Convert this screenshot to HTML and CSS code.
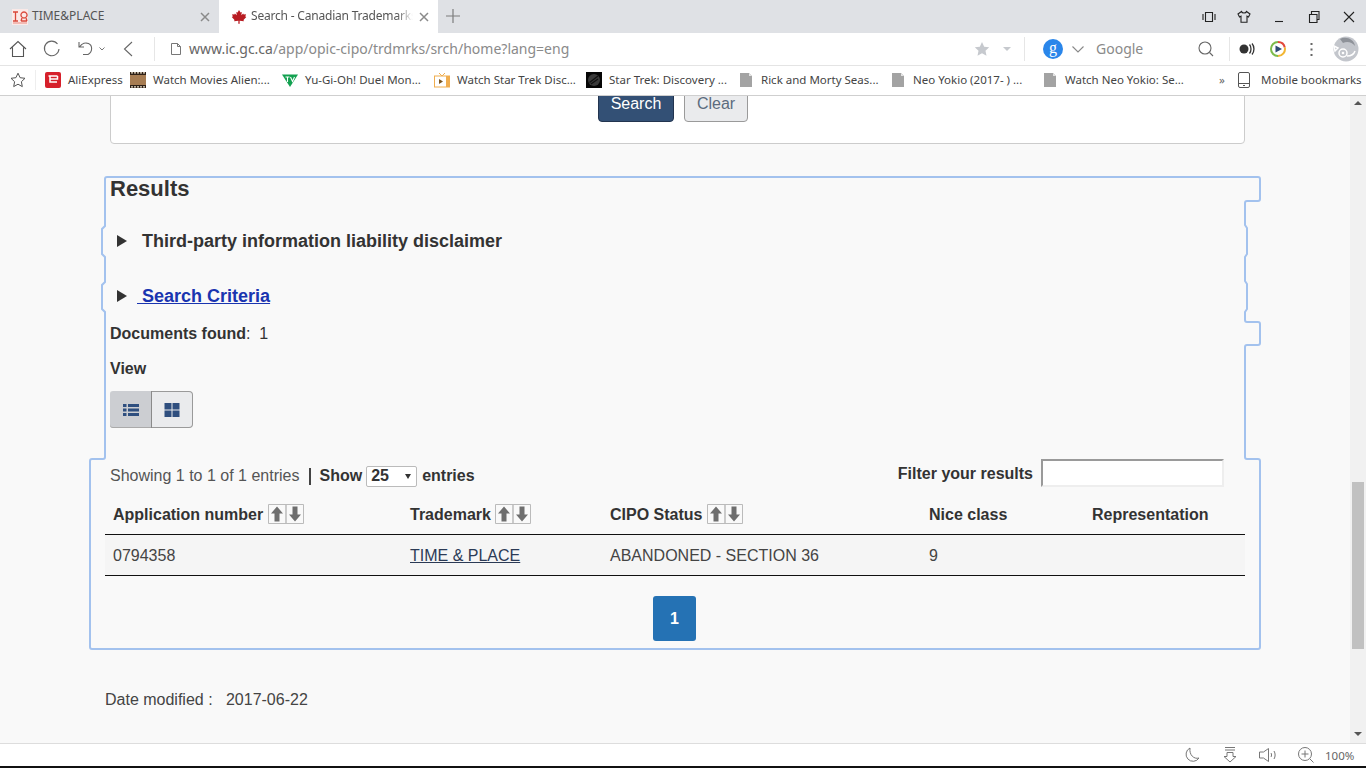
FILE: index.html

```html
<!DOCTYPE html>
<html lang="en">

<head>
    <meta charset="UTF-8">
    <title>Search - Canadian Trademarks</title>
    <link rel="stylesheet" href="styles.css">
</head>

<body>
    <!-- Tab strip -->
    <div class="tabstrip">
        <div class="tab">
            <svg class="fav" viewBox="0 0 16 16"><rect width="16" height="16" fill="#fbe9e7"/><path d="M1 3h5M3.500 3v9M1 12h5M9 12h6M12 3a3 3 0 1 0 .01 0M10 9l-1 3M14 9l1 3" fill="none" stroke="#d9483b" stroke-width="1.300"/><path d="M1 14h14" stroke="#e98b80"/></svg>
            <span class="tab-title">TIME&amp;PLACE</span>
            <svg class="tab-close" viewBox="0 0 10 10"><path d="M1 1l8 8M9 1l-8 8" stroke="#8a8a8a" stroke-width="1.500"/></svg>
        </div>
        <div class="tab tab-active">
            <svg class="fav" viewBox="0 0 16 16"><path d="M8 1l1.500 2.500 1.300-.6-.5 3.300 1.900-1.800.5 1.200 2.300-.4-.7 2.300 1 .5L12.500 11l.4 1.300-4.300-.5.100 3H7.300l.1-3-4.300.5.400-1.300L.8 8l1-.5-.7-2.300 2.300.4.500-1.200 1.900 1.800-.5-3.300 1.300.6z" fill="#b81c22"/></svg>
            <span class="tab-title tab-fade">Search - Canadian Trademarks</span>
            <svg class="tab-close" viewBox="0 0 10 10"><path d="M1 1l8 8M9 1l-8 8" stroke="#8a8a8a" stroke-width="1.500"/></svg>
        </div>
        <svg class="new-tab" viewBox="0 0 14 14"><path d="M7 0v14M0 7h14" stroke="#7d7d7d" stroke-width="1.200"/></svg>
        <div class="window-btns">
            <svg viewBox="0 0 14 14"><path d="M3.500 2.500h7v9h-7zM1 4v6M13 4v6" fill="none" stroke="#222" stroke-width="1.100"/></svg>
            <svg viewBox="0 0 14 14"><path d="M4.500 1.500L1 4l1.500 3 1.500-.8v6h6v-6l1.500.8L13 4 9.500 1.500c-.5 2-4.500 2-5 0z" fill="none" stroke="#222" stroke-width="1.100"/></svg>
            <svg viewBox="0 0 14 14"><path d="M3 11.500h8" stroke="#222" stroke-width="1.100"/></svg>
            <svg viewBox="0 0 14 14"><path d="M2.500 4.500h7.500v8H2.500zM4.500 4.500v-3h7.500v8h-2" fill="none" stroke="#222" stroke-width="1.100"/></svg>
            <svg viewBox="0 0 14 14"><path d="M2 2l10 10M12 2L2 12" stroke="#222" stroke-width="1.100"/></svg>
        </div>
    </div>

    <!-- Address bar -->
    <div class="toolbar">
        <svg class="tb-home" viewBox="0 0 18 18"><path d="M1 9l8-7.500L17 9M3.500 7.500v9h11v-9" fill="none" stroke="#555" stroke-width="1.100"/></svg>
        <svg class="tb-reload" viewBox="0 0 18 18"><path d="M14.500 4A7.300 7.300 0 1 0 16 9" fill="none" stroke="#666" stroke-width="1.100"/></svg>
        <svg class="tb-undo" viewBox="0 0 18 18"><path d="M2 2v5h5M2.500 7C5 3 9 2.500 11.500 3.500c4 1.700 4.500 8-.5 11H6" fill="none" stroke="#666" stroke-width="1.100"/></svg>
        <svg class="tb-chev" viewBox="0 0 6 4"><path d="M.5.500L3 3 5.500.5" fill="none" stroke="#777"/></svg>
        <svg class="tb-back" viewBox="0 0 10 16"><path d="M9 1L1.500 8 9 15" fill="none" stroke="#666" stroke-width="1.100"/></svg>
        <div class="tb-sep tb-sep-first"></div>
        <svg class="tb-doc" viewBox="0 0 10 12"><path d="M.5.500h6l3 3v8h-9zM6.500.5v3h3" fill="none" stroke="#777"/></svg>
        <div class="url"><span class="url-host">www.ic.gc.ca</span>/app/opic-cipo/trdmrks/srch/home?lang=eng</div>
        <svg class="tb-star" viewBox="0 0 16 16"><path d="M8 1l2.200 4.700 5 .6-3.700 3.500 1 5L8 12.300 3.500 14.800l1-5L.8 6.300l5-.6z" fill="#c6c9ce"/></svg>
        <svg class="tb-drop" viewBox="0 0 8 4"><path d="M0 0h8L4 4z" fill="#c6c9ce"/></svg>
        <div class="tb-sep"></div>
        <div class="g-badge">g</div>
        <svg class="tb-gchev" viewBox="0 0 12 7"><path d="M.5.500L6 6l5.500-5.500" fill="none" stroke="#888" stroke-width="1.100"/></svg>
        <div class="search-box">Google</div>
        <svg class="tb-search" viewBox="0 0 16 16"><circle cx="7" cy="7" r="6" fill="none" stroke="#666" stroke-width="1.100"/><path d="M11.500 11.500L15 15" stroke="#666" stroke-width="1.100"/></svg>
        <div class="tb-sep"></div>
        <svg class="tb-rec" viewBox="0 0 16 12"><circle cx="5" cy="6" r="4.500" fill="#333"/><path d="M10.500 1.500c2 2.500 2 6.500 0 9M13 .5c2.600 3 2.600 8 0 11" fill="none" stroke="#333" stroke-width="1.300"/></svg>
        <svg class="tb-play" viewBox="0 0 16 16"><path d="M8 1a7 7 0 0 1 6.800 5.500" fill="none" stroke="#e2483b" stroke-width="2"/><path d="M14.800 6.500A7 7 0 0 1 8 15" fill="none" stroke="#f2b632" stroke-width="2"/><path d="M8 15A7 7 0 0 1 8 1" fill="none" stroke="#7cbb4c" stroke-width="2"/><path d="M5.500 4.500l6.500 3.500-6.500 3.500z" fill="#2d4a73"/></svg>
        <svg class="tb-dots" viewBox="0 0 3 13"><path d="M.5 0h2v2h-2zM.5 5.500h2v2h-2zM.5 11h2v2h-2z" fill="#666"/></svg>
        <svg class="tb-avatar" viewBox="0 0 26 26"><circle cx="13" cy="13" r="12.500" fill="#c3c6cc"/><path d="M7 3c6-3 14 0 15 7-3-4-8-5-12-3z" fill="#8e9299"/><circle cx="10" cy="17" r="4" fill="none" stroke="#fff" stroke-width="1.500"/><circle cx="10" cy="17" r="1.300" fill="#fff"/><path d="M1 10l4 2-3 3zM14 20c4 0 7-2 8-5" fill="none" stroke="#fff" stroke-width="1.500"/></svg>
    </div>

    <!-- Bookmarks -->
    <div class="bookmarks">
        <svg class="bm-star" viewBox="0 0 16 16"><path d="M8 1.200l2.100 4.500 4.900.6-3.600 3.400.9 4.900L8 12.200l-4.300 2.400.9-4.900L1 6.300l4.900-.6z" fill="none" stroke="#555"/></svg>
        <div class="bm-sep"></div>
        <a class="bm bm-first">
            <svg viewBox="0 0 16 16"><rect width="16" height="16" rx="2" fill="#d6202b"/><path d="M3.500 4h9M5 4v6h7M5 7h7.500V4M6 12.500h.01M11 12.500h.01" fill="none" stroke="#fff" stroke-width="1.500"/></svg>
            <span class="bm-text">AliExpress</span>
        </a>
        <a class="bm">
            <svg viewBox="0 0 16 16"><rect width="16" height="16" fill="#2e2117"/><rect y="3" width="16" height="10" fill="#a67c52"/><path d="M1 .8h14M1 14.800h14" stroke="#e8dcc8" stroke-width="1.300" stroke-dasharray="2 1"/></svg>
            <span class="bm-text">Watch Movies Alien:...</span>
        </a>
        <a class="bm">
            <svg viewBox="0 0 16 16"><path d="M0 2.500h16L8 15z" fill="#12a150"/><path d="M3.500 5h4M5.500 5v5M8.500 5l2 4.500L12.500 5" fill="none" stroke="#fff" stroke-width="1.100"/></svg>
            <span class="bm-text">Yu-Gi-Oh! Duel Mon...</span>
        </a>
        <a class="bm">
            <svg viewBox="0 0 16 16"><path d="M5 1l3 3 3-3" fill="none" stroke="#f0ad4e"/><rect x=".5" y="4" width="15" height="11" fill="#fff" stroke="#f0ad4e"/><rect x="12" y="4" width="3.500" height="11" fill="#f0ad4e"/><path d="M5 7l4 2.500L5 12z" fill="#7a5520"/></svg>
            <span class="bm-text">Watch Star Trek Disc...</span>
        </a>
        <a class="bm">
            <svg viewBox="0 0 16 16"><rect width="16" height="16" fill="#060606"/><circle cx="8" cy="8" r="6" fill="#3a3a3a"/><path d="M3.500 10.500L12 4M5 12l7-5" stroke="#111" stroke-width="1.300"/></svg>
            <span class="bm-text">Star Trek: Discovery ...</span>
        </a>
        <a class="bm">
            <svg viewBox="0 0 16 16"><path d="M2 1h9l3 3v11H2z" fill="#a3a3a3"/><path d="M11 1l3 3h-3z" fill="#e4e4e4"/></svg>
            <span class="bm-text">Rick and Morty Seas...</span>
        </a>
        <a class="bm">
            <svg viewBox="0 0 16 16"><path d="M2 1h9l3 3v11H2z" fill="#a3a3a3"/><path d="M11 1l3 3h-3z" fill="#e4e4e4"/></svg>
            <span class="bm-text">Neo Yokio (2017- ) ...</span>
        </a>
        <a class="bm">
            <svg viewBox="0 0 16 16"><path d="M2 1h9l3 3v11H2z" fill="#a3a3a3"/><path d="M11 1l3 3h-3z" fill="#e4e4e4"/></svg>
            <span class="bm-text">Watch Neo Yokio: Se...</span>
        </a>
        <span class="bm-more">&raquo;</span>
        <a class="bm bm-mobile">
            <svg viewBox="0 0 14 16"><rect x="1.500" y=".5" width="11" height="15" rx="1.500" fill="none" stroke="#555"/><path d="M1.500 11.500h11M6 13.500h2" stroke="#555"/></svg>
            <span class="bm-text">Mobile bookmarks</span>
        </a>
    </div>

    <!-- Page -->
    <div class="viewport">
        <div class="content">
            <div class="search-panel">
                <button class="btn btn-primary">Search</button>
                <button class="btn">Clear</button>
            </div>

            <section class="results">
                <h2>Results</h2>

                <details class="disclosure">
                    <summary>Third-party information liability disclaimer</summary>
                </details>
                <details class="disclosure disclosure-link">
                    <summary><a href="#"> Search Criteria</a></summary>
                </details>

                <p class="found"><b>Documents found</b>:&nbsp; 1</p>
                <p class="view-label"><b>View</b></p>

                <div class="view-btns">
                    <button class="view-btn view-btn-on">
                        <svg viewBox="0 0 16 14"><path d="M0 1h3.500v3H0zM5 1h11v3H5zM0 5.500h3.500v3H0zM5 5.500h11v3H5zM0 10h3.500v3H0zM5 10h11v3H5z" fill="#2f4f7f"/></svg>
                    </button>
                    <button class="view-btn">
                        <svg viewBox="0 0 16 14"><path d="M.5 0h7v6.500h-7zM8.500 0h7v6.500h-7zM.5 7.500h7V14h-7zM8.500 7.500h7V14h-7z" fill="#2f4f7f"/></svg>
                    </button>
                </div>

                <div class="table-top">
                    <div class="showing">
                        Showing 1 to 1 of 1 entries
                        <span class="pipe"></span>
                        <label class="show-label">Show</label>
                        <span class="select-box">25<i></i></span>
                        <label class="show-label">entries</label>
                    </div>
                    <div class="filter">
                        <label class="show-label filter-label">Filter your results</label>
                        <input type="text" class="filter-input">
                    </div>
                </div>

                <table class="result-table">
                    <thead>
                        <tr>
                            <th class="col-app">Application number <span class="sort"><svg viewBox="0 0 36 20"><path d="M.5.500h17.500v19H.5zM18 .5h17.500v19H18z" fill="none" stroke="#bbb"/><path d="M9 2.500l6 7h-3.500v8h-5v-8H3zM27 17.500l6-7h-3.500v-8h-5v8H21z" fill="#6e6e6e"/></svg></span></th>
                            <th class="col-mark">Trademark <span class="sort"><svg viewBox="0 0 36 20"><path d="M.5.500h17.500v19H.5zM18 .5h17.500v19H18z" fill="none" stroke="#bbb"/><path d="M9 2.500l6 7h-3.500v8h-5v-8H3zM27 17.500l6-7h-3.500v-8h-5v8H21z" fill="#6e6e6e"/></svg></span></th>
                            <th class="col-status">CIPO Status <span class="sort"><svg viewBox="0 0 36 20"><path d="M.5.500h17.500v19H.5zM18 .5h17.500v19H18z" fill="none" stroke="#bbb"/><path d="M9 2.500l6 7h-3.500v8h-5v-8H3zM27 17.500l6-7h-3.500v-8h-5v8H21z" fill="#6e6e6e"/></svg></span></th>
                            <th class="col-nice">Nice class</th>
                            <th>Representation</th>
                        </tr>
                    </thead>
                    <tbody>
                        <tr>
                            <td class="cell-first">0794358</td>
                            <td><a href="#">TIME &amp; PLACE</a></td>
                            <td>ABANDONED - SECTION 36</td>
                            <td>9</td>
                            <td></td>
                        </tr>
                    </tbody>
                </table>

                <div class="pager"><span class="page-num">1</span></div>
            </section>

            <p class="modified">Date modified :&nbsp;&nbsp; 2017-06-22</p>

            <!-- Focus ring around the results block -->
            <svg class="focus-ring" viewBox="0 96 1350 647">
                <path d="M107 177H1258Q1260 177 1260 179V199Q1260 201 1258 201H1247Q1245 201 1245 203V225L1247 228V254L1245 257V281L1247 284V309L1245 312V320Q1245 322 1247 322H1258Q1260 322 1260 324V343Q1260 345 1258 345H1247Q1245 345 1245 347V457Q1245 459 1247 459H1258Q1260 459 1260 461V647Q1260 649 1258 649H92Q90 649 90 647V461Q90 459 92 459H103Q105 459 105 457V312L102 309V285L105 282V257L102 254V229L105 226V179Q105 177 107 177Z" fill="none" stroke="#a3c2ee" stroke-width="2"/>
            </svg>
        </div>

        <div class="scrollbar">
            <i class="arrow-up"></i>
            <div class="thumb"></div>
            <i class="arrow-down"></i>
        </div>
    </div>

    <!-- Status bar -->
    <div class="statusbar">
        <svg class="st-moon" viewBox="0 0 16 16"><path d="M6 1a7 7 0 1 0 9 10C10 12.500 5 8 6 1z" fill="none" stroke="#777"/></svg>
        <svg class="st-down" viewBox="0 0 14 16"><path d="M2 .5h10M2 3h10M4 5.500h6v4h3l-6 5.500-6-5.500h3z" fill="none" stroke="#777"/></svg>
        <svg class="st-sound" viewBox="0 0 20 14"><path d="M.5 4h4l5-3.500v13l-5-3.500h-4z" fill="none" stroke="#777"/><path d="M12 5c.7 1 .7 3 0 4M15 3c1.500 2.500 1.500 5.500 0 8" fill="none" stroke="#777"/></svg>
        <svg class="st-zoom" viewBox="0 0 16 16"><circle cx="7" cy="7" r="6.500" fill="none" stroke="#777"/><path d="M7 3.500v7M3.500 7h7M12 12l3.500 3.500" stroke="#777"/></svg>
        <span class="st-pct">100%</span>
    </div>
    <div class="screen-edge"></div>
</body>

</html>
```

FILE: styles.css

```css
* {
    box-sizing: border-box;
}

body {
    margin: 0;
    width: 1366px;
    height: 768px;
    overflow: hidden;
    display: flex;
    flex-direction: column;
    font-family: "Liberation Sans", Arial, sans-serif;
    color: #333;
    background-color: #f9f9f9;
}

svg {
    display: block;
    flex: none;
}

/* Browser chrome */
.tabstrip {
    height: 33px;
    display: flex;
    align-items: center;
    background-color: #dfe1e5;
    font-family: "Noto Sans", sans-serif;
    font-size: 12px;
    flex: none;
}

.tab {
    width: 219px;
    height: 33px;
    display: flex;
    align-items: center;
    padding-left: 12px;
    color: #555;
}

.tab-active {
    background-color: #fff;
}

.fav {
    width: 16px;
    height: 16px;
    margin-right: 4px;
}

.tab-title {
    width: 168px;
    padding-bottom: 2px;
    white-space: nowrap;
}

.tab-fade {
    width: 162px;
    letter-spacing: -0.2px;
    -webkit-mask-image: linear-gradient(to right, #000 90%, transparent);
    mask-image: linear-gradient(to right, #000 90%, transparent);
}

.tab-close {
    width: 10px;
    height: 10px;
    margin-left: auto;
    margin-right: 9px;
}

.new-tab {
    width: 14px;
    height: 14px;
    margin: -2px 0 0 8px;
}

.window-btns {
    margin-left: auto;
    display: flex;
    gap: 21px;
    margin-right: 10px;
}

.window-btns svg {
    width: 14px;
    height: 14px;
}

.toolbar {
    height: 33px;
    display: flex;
    align-items: center;
    background-color: #fff;
    border-bottom: 1px solid #e4e4e4;
    color: #8a8a8a;
    font-family: "Noto Sans", sans-serif;
    font-size: 14px;
    flex: none;
}

.tb-home { width: 18px; height: 18px; margin-left: 9px; }
.tb-reload { width: 18px; height: 18px; margin-left: 16px; }
.tb-undo { width: 18px; height: 18px; margin-left: 16px; }
.tb-chev { width: 6px; height: 4px; margin-left: 4px; }
.tb-back { width: 10px; height: 16px; margin-left: 18px; }

.tb-sep {
    width: 1px;
    height: 24px;
    background-color: #e6e6e6;
}

.tb-sep-first {
    margin-left: 21px;
}

.tb-doc { width: 10px; height: 12px; margin-left: 16px; }

.url {
    margin-left: 8px;
    width: 785px;
    padding-bottom: 2px;
    white-space: nowrap;
}

.url-host {
    color: #666;
}

.tb-star { width: 16px; height: 16px; }
.tb-drop { width: 8px; height: 4px; margin-left: 13px; margin-right: 13px; }

.g-badge {
    width: 20px;
    height: 20px;
    margin-left: 18px;
    border-radius: 50%;
    background-color: #2a86ea;
    color: #fff;
    font-family: "Liberation Serif", serif;
    font-size: 16px;
    line-height: 17px;
    text-align: center;
}

.tb-gchev { width: 12px; height: 7px; margin-left: 9px; }

.search-box {
    width: 102px;
    margin-left: 12px;
    padding-bottom: 2px;
}

.tb-search { width: 16px; height: 16px; margin-right: 15px; }
.tb-rec { width: 16px; height: 12px; margin-left: 9px; }
.tb-play { width: 16px; height: 16px; margin-left: 15px; }
.tb-dots { width: 3px; height: 13px; margin-left: 24px; }
.tb-avatar { width: 26px; height: 26px; margin-left: 20px; }

.bookmarks {
    height: 30px;
    display: flex;
    align-items: center;
    padding-bottom: 1px;
    background-color: #fff;
    border-bottom: 1px solid #cfcfcf;
    font-family: "Noto Sans", sans-serif;
    font-size: 11.500px;
    color: #444;
    flex: none;
}

.bm-star { width: 16px; height: 16px; margin-left: 10px; }

.bm-sep {
    width: 1px;
    height: 20px;
    margin-left: 9px;
    margin-right: 9px;
    background-color: #eee;
}

.bm {
    width: 152px;
    min-width: 0;
    flex: none;
    display: flex;
    align-items: center;
    gap: 7px;
    white-space: nowrap;
}

.bm svg {
    width: 16px;
    height: 16px;
}

.bm-text {
    padding-bottom: 2px;
}

.bm-first {
    width: 85px;
}

.bm-more {
    margin-left: 25px;
    width: 18px;
    padding-bottom: 2px;
    color: #666;
}

.bm-mobile {
    width: auto;
    gap: 10px;
}

.bm-mobile svg {
    width: 14px;
}

/* Page area */
.viewport {
    flex: 1;
    min-height: 0;
    display: flex;
}

.content {
    flex: 1;
    position: relative;
    overflow: hidden;
}

.search-panel {
    margin: -26px 0 0 110px;
    width: 1135px;
    height: 74px;
    padding-top: 14px;
    padding-right: 9px;
    background-color: #fff;
    border: 1px solid #ccc;
    border-radius: 4px;
    display: flex;
    justify-content: center;
    gap: 10px;
}

.btn {
    width: 64px;
    height: 37px;
    padding: 0;
    border: 1px solid #9a9a9a;
    border-radius: 4px;
    background-color: #eaebed;
    color: #5c6b7e;
    font-family: "Liberation Sans", Arial, sans-serif;
    font-size: 16px;
}

.btn-primary {
    width: 76px;
    border-color: #22344f;
    background-color: #335075;
    color: #fff;
}

.results {
    margin: 33px 0 0 110px;
    width: 1135px;
}

.results h2 {
    margin: 0;
    height: 23px;
    font-size: 22px;
    line-height: 23px;
    color: #333;
}

.disclosure summary {
    display: flex;
    list-style: none;
    align-items: center;
    font-size: 18px;
    font-weight: bold;
    line-height: 22px;
}

.disclosure summary::before {
    content: "";
    width: 0;
    height: 0;
    margin: 0 15px 0 7px;
    border-left: 10px solid #333;
    border-top: 6px solid transparent;
    border-bottom: 6px solid transparent;
}

.disclosure {
    margin-top: 30px;
}

.disclosure-link {
    margin-top: 33px;
}

.disclosure-link a {
    color: #1a35b0;
    white-space: pre;
}

.disclosure-link summary::before {
    margin-right: 10px;
}

.found {
    margin: 17px 0 0;
    font-size: 16px;
    line-height: 20px;
}

.view-label {
    margin: 15px 0 0;
    font-size: 16px;
    line-height: 20px;
}

.view-btns {
    display: flex;
    margin-top: 12px;
    width: 83px;
    height: 37px;
}

.view-btn {
    width: 41px;
    height: 37px;
    display: flex;
    align-items: center;
    justify-content: center;
    padding: 0;
    border: 1px solid #9a9a9a;
    border-left: none;
    border-radius: 0 4px 4px 0;
    background-color: #eaebed;
}

.view-btn svg {
    width: 16px;
    height: 14px;
}

.view-btn-on {
    width: 42px;
    border: none;
    border-right: 1px solid #8a8a8a;
    border-radius: 3px 0 0 3px;
    background-color: #ccced2;
    box-shadow: inset 0 -1px 0 #aaa;
}

.table-top {
    margin-top: 31px;
    height: 28px;
    display: flex;
    justify-content: space-between;
    padding-right: 21px;
    font-size: 16px;
}

.showing {
    display: flex;
    align-items: center;
    color: #555;
    margin-top: 5px;
    height: 24px;
}

.pipe {
    width: 2px;
    height: 17px;
    margin: 0 8px 0 10px;
    background-color: #444;
}

.show-label {
    color: #333;
    font-weight: bold;
}

.filter-label {
    padding-top: 2px;
}

.select-box {
    width: 51px;
    height: 21px;
    margin: 0 5px 0 4px;
    padding-left: 4px;
    display: flex;
    align-items: center;
    justify-content: space-between;
    padding-right: 5px;
    background-color: #fff;
    border: 1px solid #bbb;
    border-radius: 2px;
    color: #333;
    font-weight: bold;
}

.select-box i {
    border-top: 5px solid #333;
    border-left: 3px solid transparent;
    border-right: 3px solid transparent;
}

.filter {
    display: flex;
    align-items: center;
    gap: 8px;
}

.filter-input {
    width: 183px;
    height: 28px;
    padding: 0;
    background-color: #fff;
    border: 2px solid;
    border-color: #9a9a9a #eee #eee #9a9a9a;
}

.result-table {
    width: 1140px;
    margin: 15px 0 0 -5px;
    border-collapse: collapse;
    table-layout: fixed;
    font-size: 16px;
}

.result-table th {
    height: 32px;
    padding: 0 3px 5px;
    line-height: 22px;
    text-align: left;
    vertical-align: middle;
    white-space: nowrap;
    border-bottom: 1px solid #111;
}

.result-table .col-app { width: 302px; padding-left: 8px; }
.col-mark { width: 200px; }
.col-status { width: 319px; }
.col-nice { width: 163px; }

.sort {
    display: inline-block;
    width: 36px;
    height: 20px;
    vertical-align: -4px;
}

.result-table td {
    height: 41px;
    padding: 2px 3px 0;
    color: #444;
    background-color: #f5f5f5;
    border-bottom: 1px solid #111;
}

.result-table .cell-first {
    padding-left: 8px;
}

.result-table a {
    color: #2b3a55;
}

.pager {
    display: flex;
    justify-content: center;
    margin-top: 20px;
    padding-right: 6px;
}

.page-num {
    width: 43px;
    height: 45px;
    background-color: #2572b4;
    border-radius: 3px;
    color: #fff;
    font-size: 16px;
    font-weight: bold;
    line-height: 45px;
    text-align: center;
}

.modified {
    margin: 49px 0 0 105px;
    font-size: 16px;
    line-height: 20px;
    color: #444;
}

.focus-ring {
    position: absolute;
    top: 0;
    left: 0;
    width: 1350px;
    height: 647px;
    pointer-events: none;
}

.scrollbar {
    width: 16px;
    background-color: #f1f1f1;
    position: relative;
    padding: 0 2px;
}

.thumb {
    height: 167px;
    margin-top: 386px;
    background-color: #c1c1c1;
}

.arrow-up,
.arrow-down {
    position: absolute;
    left: 4px;
    border-left: 4px solid transparent;
    border-right: 4px solid transparent;
}

.arrow-up {
    top: 5px;
    border-bottom: 4px solid #555;
}

.arrow-down {
    bottom: 7px;
    border-top: 4px solid #555;
}

/* Bottom bar */
.statusbar {
    height: 23px;
    display: flex;
    align-items: center;
    background-color: #fff;
    border-top: 1px solid #ddd;
    color: #666;
    font-family: "Noto Sans", sans-serif;
    font-size: 11.500px;
    flex: none;
}

.st-moon { width: 16px; height: 16px; margin-left: 1184px; }
.st-down { width: 14px; height: 16px; margin-left: 23px; }
.st-sound { width: 20px; height: 14px; margin-left: 22px; }
.st-zoom { width: 16px; height: 16px; margin-left: 19px; }
.st-pct { margin-left: 11px; }

.screen-edge {
    height: 2px;
    background-color: #111;
    flex: none;
}
```
